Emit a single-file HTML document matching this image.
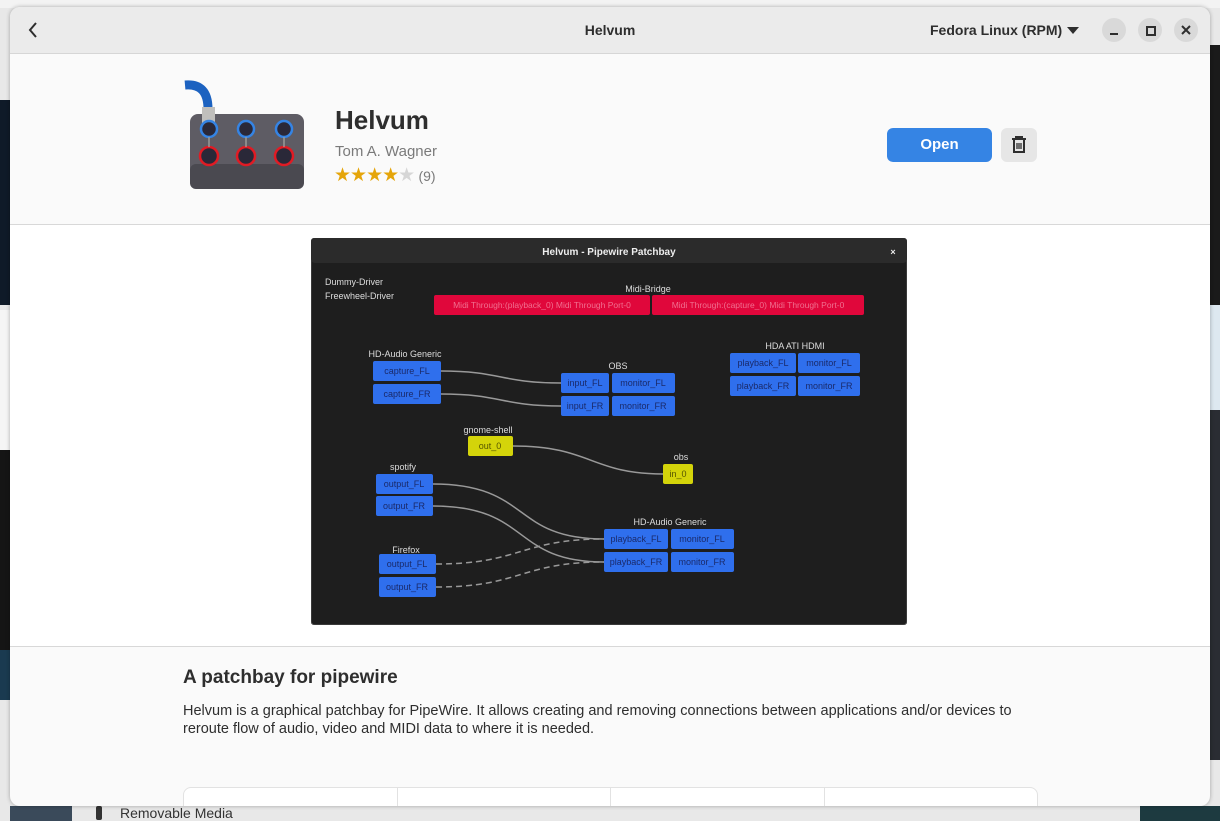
<!DOCTYPE html>
<html><head><meta charset="utf-8"><style>
body{margin:0;width:1220px;height:821px;overflow:hidden;background:#e8e8e8;font-family:"Liberation Sans",sans-serif;position:relative}
.abs{position:absolute}
</style></head><body>
<div class="abs" style="left:0;top:0;width:1220px;height:8px;background:#f3f3f3"></div>
<div class="abs" style="left:0;top:100px;width:10px;height:205px;background:#0f1a28"></div>
<div class="abs" style="left:0;top:310px;width:10px;height:140px;background:#f5f5f5"></div>
<div class="abs" style="left:0;top:450px;width:10px;height:200px;background:#151515"></div>
<div class="abs" style="left:0;top:650px;width:10px;height:50px;background:#1a3a50"></div>
<div class="abs" style="left:1210px;top:45px;width:10px;height:260px;background:#1a1a1a"></div>
<div class="abs" style="left:1210px;top:305px;width:10px;height:105px;background:#dde8f0"></div>
<div class="abs" style="left:1210px;top:410px;width:10px;height:350px;background:#2a2d33"></div>
<div class="abs" style="left:1140px;top:806px;width:80px;height:15px;background:#1d3a40"></div>
<div class="abs" style="left:10px;top:806px;width:62px;height:15px;background:#3a4a5a"></div>
<div class="abs" style="left:120px;top:805px;font-size:14px;color:#333">Removable Media</div>
<div class="abs" style="left:96px;top:806px;width:6px;height:14px;background:#333;border-radius:2px"></div>
<div class="abs" style="left:10px;top:7px;width:1200px;height:799px;background:#fafafa;border-radius:10px;overflow:hidden;box-shadow:0 0 4px rgba(0,0,0,.3)">
 <div class="abs" style="left:0;top:0;width:1200px;height:46px;background:#ebebeb;border-bottom:1px solid #d6d6d6"></div>
 <svg class="abs" style="left:16px;top:14px" width="14" height="18"><path d="M10 2 L4 9 L10 16" fill="none" stroke="#2e2e2e" stroke-width="2"/></svg>
 <div class="abs" style="left:0;width:1200px;top:15px;text-align:center;font-size:14px;font-weight:bold;color:#2e2e2e">Helvum</div>
 <div class="abs" style="left:920px;top:15px;font-size:14px;font-weight:bold;color:#2e2e2e">Fedora Linux (RPM)</div>
 <svg class="abs" style="left:1057px;top:20px" width="12" height="8"><path d="M0 0H12L6 7Z" fill="#2e2e2e"/></svg>
 <div class="abs" style="left:1092px;top:11px;width:24px;height:24px;border-radius:12px;background:#d9d9d9"></div>
 <div class="abs" style="left:1100px;top:26px;width:8px;height:2px;background:#2e2e2e"></div>
 <div class="abs" style="left:1128px;top:11px;width:24px;height:24px;border-radius:12px;background:#d9d9d9"></div>
 <div class="abs" style="left:1136px;top:19px;width:6px;height:6px;border:2px solid #2e2e2e"></div>
 <div class="abs" style="left:1164px;top:11px;width:24px;height:24px;border-radius:12px;background:#d9d9d9"></div>
 <svg class="abs" style="left:1171px;top:18px" width="10" height="10"><path d="M1 1L9 9M9 1L1 9" stroke="#2e2e2e" stroke-width="2"/></svg>
 <svg class="abs" style="left:170px;top:72px" width="130" height="115">
  <rect x="10" y="35" width="114" height="75" rx="8" fill="#5e5c64"/>
  <rect x="10" y="85" width="114" height="25" rx="6" fill="#4a4950"/>
  <path d="M5 6 Q28 4 28 30" fill="none" stroke="#1c62c0" stroke-width="9"/>
  <rect x="22" y="28" width="13" height="26" fill="#c0bfbc"/>
  <g fill="#2a2838" stroke-width="2.5">
   <circle cx="29" cy="50" r="8" stroke="#3584e4"/><circle cx="66" cy="50" r="8" stroke="#3584e4"/><circle cx="104" cy="50" r="8" stroke="#3584e4"/>
   <circle cx="29" cy="77" r="9" stroke="#e01b24"/><circle cx="66" cy="77" r="9" stroke="#e01b24"/><circle cx="104" cy="77" r="9" stroke="#e01b24"/>
  </g>
  <path d="M29 58V68M66 58V68M104 58V68" stroke="#9a9996" stroke-width="1.5"/>
 </svg>
 <div class="abs" style="left:325px;top:98px;font-size:26px;font-weight:bold;color:#2e2e2e">Helvum</div>
 <div class="abs" style="left:325px;top:136px;font-size:15px;color:#7a7a7a">Tom A. Wagner</div>
 <div class="abs" style="left:324px;top:157px;font-size:19px;color:#e5a50a;letter-spacing:-1px">★★★★<span style="color:#d6d6d6">★</span> <span style="font-size:14px;color:#7a7a7a;letter-spacing:0">(9)</span></div>
 <div class="abs" style="left:877px;top:121px;width:105px;height:34px;border-radius:6px;background:#3584e4;color:#fff;font-weight:bold;font-size:15px;text-align:center;line-height:34px">Open</div>
 <div class="abs" style="left:991px;top:121px;width:36px;height:34px;border-radius:6px;background:#e6e6e6"></div>
 <svg class="abs" style="left:1001px;top:129px" width="16" height="18"><path d="M1 3H15M5 3V1H11V3M3 4V16H13V4" fill="none" stroke="#2e2e2e" stroke-width="2"/><path d="M6 7V13M8 7V13M10 7V13" stroke="#2e2e2e" stroke-width="1.3"/></svg>
 <div class="abs" style="left:0;top:217px;width:1200px;height:421px;background:#fff;border-top:1px solid #d8d8d8;border-bottom:1px solid #d8d8d8"></div>
 <svg class="abs" style="left:301px;top:231px" width="596" height="387" font-family="Liberation Sans" font-size="9" text-anchor="middle">
  <rect width="596" height="387" rx="4" fill="#1e1e1e" stroke="#555"/>
  <rect width="596" height="25" rx="4" fill="#2b2b2b"/>
  <text x="298" y="17" fill="#eee" font-weight="bold" font-size="10">Helvum - Pipewire Patchbay</text>
  <text x="582" y="17" fill="#eee" font-weight="bold">×</text>
  <g fill="#ddd"><text x="14" y="47" text-anchor="start">Dummy-Driver</text><text x="14" y="61" text-anchor="start">Freewheel-Driver</text>
  <text x="337" y="54">Midi-Bridge</text><text x="94" y="119">HD-Audio Generic</text><text x="307" y="131">OBS</text>
  <text x="484" y="111">HDA ATI HDMI</text><text x="177" y="195">gnome-shell</text><text x="370" y="222">obs</text>
  <text x="92" y="232">spotify</text><text x="95" y="315">Firefox</text><text x="359" y="287">HD-Audio Generic</text></g>
  <g fill="#e0073b"><rect x="123" y="57" width="216" height="20" rx="2"/><rect x="341" y="57" width="212" height="20" rx="2"/></g>
  <g fill="#f07090" font-size="8.5"><text x="231" y="70">Midi Through:(playback_0) Midi Through Port-0</text><text x="447" y="70">Midi Through:(capture_0) Midi Through Port-0</text></g>
  <g fill="#2f6fed">
   <rect x="62" y="123" width="68" height="20" rx="2"/><rect x="62" y="146" width="68" height="20" rx="2"/>
   <rect x="250" y="135" width="48" height="20" rx="2"/><rect x="301" y="135" width="63" height="20" rx="2"/>
   <rect x="250" y="158" width="48" height="20" rx="2"/><rect x="301" y="158" width="63" height="20" rx="2"/>
   <rect x="419" y="115" width="66" height="20" rx="2"/><rect x="487" y="115" width="62" height="20" rx="2"/>
   <rect x="419" y="138" width="66" height="20" rx="2"/><rect x="487" y="138" width="62" height="20" rx="2"/>
   <rect x="65" y="236" width="57" height="20" rx="2"/><rect x="65" y="258" width="57" height="20" rx="2"/>
   <rect x="68" y="316" width="57" height="20" rx="2"/><rect x="68" y="339" width="57" height="20" rx="2"/>
   <rect x="293" y="291" width="64" height="20" rx="2"/><rect x="360" y="291" width="63" height="20" rx="2"/>
   <rect x="293" y="314" width="64" height="20" rx="2"/><rect x="360" y="314" width="63" height="20" rx="2"/>
  </g>
  <g fill="#d4d40a"><rect x="157" y="198" width="45" height="20" rx="2"/><rect x="352" y="226" width="30" height="20" rx="2"/></g>
  <g fill="#1a2a6a">
   <text x="96" y="136">capture_FL</text><text x="96" y="159">capture_FR</text>
   <text x="274" y="148">input_FL</text><text x="332" y="148">monitor_FL</text><text x="274" y="171">input_FR</text><text x="332" y="171">monitor_FR</text>
   <text x="452" y="128">playback_FL</text><text x="518" y="128">monitor_FL</text><text x="452" y="151">playback_FR</text><text x="518" y="151">monitor_FR</text>
   <text x="93" y="249">output_FL</text><text x="93" y="271">output_FR</text><text x="96" y="329">output_FL</text><text x="96" y="352">output_FR</text>
   <text x="325" y="304">playback_FL</text><text x="391" y="304">monitor_FL</text><text x="325" y="327">playback_FR</text><text x="391" y="327">monitor_FR</text>
  </g>
  <g fill="#555500"><text x="179" y="211">out_0</text><text x="367" y="239">in_0</text></g>
  <g fill="none" stroke="#999" stroke-width="1.5">
   <path d="M130 133 C190 133 190 145 250 145"/><path d="M130 156 C190 156 190 168 250 168"/>
   <path d="M202 208 C280 208 280 236 352 236"/>
   <path d="M122 246 C220 246 200 301 293 301"/><path d="M122 268 C220 268 200 324 293 324"/>
   <path d="M125 326 C210 326 210 301 293 301" stroke-dasharray="6 4"/><path d="M125 349 C210 349 210 324 293 324" stroke-dasharray="6 4"/>
  </g>
 </svg>
 <div class="abs" style="left:173px;top:660px;font-size:19px;font-weight:bold;color:#2e2e2e">A patchbay for pipewire</div>
 <div class="abs" style="left:173px;top:695px;width:860px;font-size:14.5px;line-height:18px;color:#2e2e2e">Helvum is a graphical patchbay for PipeWire. It allows creating and removing connections between applications and/or devices to reroute flow of audio, video and MIDI data to where it is needed.</div>
 <div class="abs" style="left:173px;top:780px;width:853px;height:40px;background:#fff;border:1px solid #e2e2e2;border-radius:8px"></div>
 <div class="abs" style="left:387px;top:781px;width:1px;height:20px;background:#e2e2e2"></div>
 <div class="abs" style="left:600px;top:781px;width:1px;height:20px;background:#e2e2e2"></div>
 <div class="abs" style="left:814px;top:781px;width:1px;height:20px;background:#e2e2e2"></div>
</div>
</body></html>
